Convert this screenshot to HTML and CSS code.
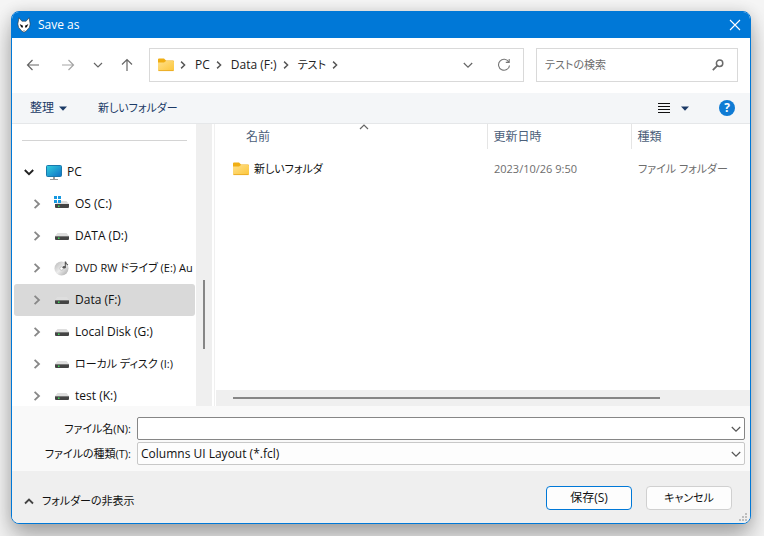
FILE: index.html
```html
<!doctype html>
<html lang="ja">
<head>
<meta charset="utf-8">
<title>Save as</title>
<link rel="stylesheet" href="styles.css">
</head>

<body>
	<!-- shared icons -->
	<svg class="defs" width="0" height="0">
		<defs>
			<linearGradient id="gold" x1="0" y1="0" x2="1" y2="1"><stop offset="0" stop-color="#ffe08a"/><stop offset="1" stop-color="#fcc63a"/></linearGradient>
			<linearGradient id="screen" x1="0" y1="0" x2="1" y2="1"><stop offset="0" stop-color="#32d0dd"/><stop offset="1" stop-color="#0f6fc6"/></linearGradient>
			<linearGradient id="disc" x1="0" y1="0" x2="1" y2="1"><stop offset="0" stop-color="#b5b5b5"/><stop offset=".5" stop-color="#ececec"/><stop offset="1" stop-color="#a5a5a5"/></linearGradient>
		</defs>
		<symbol id="folder" viewBox="0 0 16 14">
			<path d="M0 1.5Q0 .5 1 .5H6L8 2.5H15Q16 2.5 16 3.5V8H0z" fill="#f0ae13"/>
			<path d="M0 4.5H6L8 3H15Q16 3 16 4V12Q16 13 15 13H1Q0 13 0 12z" fill="url(#gold)"/>
			<path d="M.5 12.6H15.5" stroke="#e6a41c" stroke-width=".8"/>
		</symbol>
		<symbol id="drive" viewBox="0 0 16 16">
			<path d="M3.5 5H12.5L15 8H1z" fill="#dedede"/>
			<path d="M1 8H15V11Q15 12 14 12H2Q1 12 1 11z" fill="#444"/>
			<path d="M1 8.5H15" stroke="#777"/>
			<path d="M4 9.5H5.5V11H4z" fill="#3fdc5a"/>
		</symbol>
		<symbol id="right" viewBox="0 0 10 10"><path d="M2.6 .8L7 5L2.6 9.2" fill="none" stroke="currentColor" stroke-width="1.8"/></symbol>
		<symbol id="down" viewBox="0 0 10 10"><path d="M.8 3L5 7.2L9.2 3" fill="none" stroke="currentColor" stroke-width="1.2"/></symbol>
		<symbol id="open" viewBox="0 0 10 10"><path d="M.8 3L5 7.2L9.2 3" fill="none" stroke="currentColor" stroke-width="1.9"/></symbol>
		<symbol id="caret" viewBox="0 0 8 5"><path d="M0 .5H8L4 4.7z" fill="#1b3a66"/></symbol>
	</svg>

	<div class="dialog">
		<div class="title">
			<svg width="14" height="16" viewBox="0 0 14 16">
				<path d="M2 .8L4.9 4.2H9.1L12 .8L13.2 7L12.4 10.4L9 14.2L7 15.2L5 14.2L1.6 10.4L.8 7z" fill="#fff" stroke="#333" stroke-width=".6"/>
				<path d="M2.6 7L6 8.8L5.7 10.8L4.2 10.2zM11.4 7L8 8.8L8.3 10.8L9.8 10.2z" fill="#111"/>
				<path d="M6.2 13.2H7.8L7 14z" fill="#333"/>
			</svg>
			<h1>Save as</h1>
			<button class="close" aria-label="閉じる"><svg width="12" height="12" viewBox="0 0 12 12"><path d="M1 1L11 11M11 1L1 11" stroke="#fff" stroke-width="1.1"/></svg></button>
		</div>

		<div class="nav">
			<div class="arrows">
				<button aria-label="戻る"><svg width="14" height="14" viewBox="0 0 14 14"><path d="M13 7H1.5M6.5 2L1.5 7L6.5 12"/></svg></button>
				<button aria-label="進む" disabled><svg width="14" height="14" viewBox="0 0 14 14"><path d="M1 7H12.5M7.5 2L12.5 7L7.5 12"/></svg></button>
				<button class="recent" aria-label="最近"><svg width="10" height="10" viewBox="0 0 10 10"><path d="M1 3L5 7L9 3"/></svg></button>
				<button aria-label="上へ"><svg width="14" height="14" viewBox="0 0 14 14"><path d="M7 13V1.5M2 6.5L7 1.5L12 6.5"/></svg></button>
			</div>
			<div class="address">
				<svg width="16" height="14"><use href="#folder"/></svg>
				<svg class="sep" width="8" height="8"><use href="#right"/></svg>
				<button>PC</button>
				<svg class="sep" width="8" height="8"><use href="#right"/></svg>
				<button>Data (F:)</button>
				<svg class="sep" width="8" height="8"><use href="#right"/></svg>
				<button class="kana">テスト</button>
				<svg class="sep" width="8" height="8"><use href="#right"/></svg>
				<button class="history" aria-label="履歴"><svg width="10" height="10"><use href="#down"/></svg></button>
				<button class="refresh" aria-label="更新"><svg width="14" height="14" viewBox="0 0 14 14"><path d="M11.8 4A5.5 5.5 0 1 0 12.5 7.5M12.2 1V4.4H8.8" fill="none" stroke="#777" stroke-width="1.1"/></svg></button>
			</div>
			<div class="search">
				<input class="kana" type="text" placeholder="テストの検索" aria-label="テストの検索">
				<svg width="12" height="12" viewBox="0 0 12 12"><circle cx="7.6" cy="4.2" r="3.2" fill="none" stroke="#6b6b6b" stroke-width="1.5"/><path d="M5.3 6.6L.8 11.2" stroke="#6b6b6b" stroke-width="1.8"/></svg>
			</div>
		</div>

		<div class="commands">
			<button>整理 <svg width="8" height="5"><use href="#caret"/></svg></button>
			<button class="kana">新しいフォルダー</button>
			<button class="view" aria-label="表示">
				<svg width="12" height="11" viewBox="0 0 12 11"><path d="M0 .5H12M0 3.5H12M0 6.5H12M0 9.5H12" stroke="#111"/></svg>
				<svg width="8" height="5"><use href="#caret"/></svg>
			</button>
			<button class="help" aria-label="ヘルプ">?</button>
		</div>

		<div class="main">
			<div class="tree">
				<hr>
				<ul>
					<li class="root">
						<svg class="arrow" width="10" height="10"><use href="#open"/></svg>
						<svg width="16" height="16" viewBox="0 0 16 16"><rect x=".5" y="1.5" width="15" height="11" rx="1" fill="url(#screen)" stroke="#1a78ad"/><path d="M7 13H9V15H12V16H4V15H7z" fill="#999"/></svg>
						<span>PC</span>
					</li>
					<li>
						<svg class="arrow" width="10" height="10"><use href="#right"/></svg>
						<svg width="16" height="16" viewBox="0 0 16 16"><path d="M4 5H12.5L15 8H2z" fill="#dedede"/><path d="M1 8H15V11Q15 12 14 12H2Q1 12 1 11z" fill="#444"/><path d="M4 9.5H5.5V11H4z" fill="#3fdc5a"/><path d="M0 0H3V3H0zM4 0H7V3H4zM0 4H3V7H0zM4 4H7V7H4z" fill="#1698e0"/></svg>
						<span>OS (C:)</span>
					</li>
					<li>
						<svg class="arrow" width="10" height="10"><use href="#right"/></svg>
						<svg width="16" height="16"><use href="#drive"/></svg>
						<span>DATA (D:)</span>
					</li>
					<li>
						<svg class="arrow" width="10" height="10"><use href="#right"/></svg>
						<svg width="16" height="16" viewBox="0 0 16 16"><circle cx="7.5" cy="8.5" r="7" fill="url(#disc)"/><circle cx="7.5" cy="8.5" r="1.7" fill="#fff" stroke="#aaa" stroke-width=".6"/><path d="M11.3 1.5V7M11.5 1.5Q12 4 14 5" fill="none" stroke="#555" stroke-width="1.1"/><ellipse cx="10.2" cy="7.3" rx="1.6" ry="1.3" fill="#555"/></svg>
						<span class="kana">DVD RW ドライブ (E:) Au</span>
					</li>
					<li class="on">
						<svg class="arrow" width="10" height="10"><use href="#right"/></svg>
						<svg width="16" height="16"><use href="#drive"/></svg>
						<span>Data (F:)</span>
					</li>
					<li>
						<svg class="arrow" width="10" height="10"><use href="#right"/></svg>
						<svg width="16" height="16"><use href="#drive"/></svg>
						<span>Local Disk (G:)</span>
					</li>
					<li>
						<svg class="arrow" width="10" height="10"><use href="#right"/></svg>
						<svg width="16" height="16"><use href="#drive"/></svg>
						<span class="kana">ローカル ディスク (I:)</span>
					</li>
					<li>
						<svg class="arrow" width="10" height="10"><use href="#right"/></svg>
						<svg width="16" height="16"><use href="#drive"/></svg>
						<span>test (K:)</span>
					</li>
				</ul>
			</div>
			<div class="vscroll"><div class="thumb"></div></div>
			<div class="files">
				<table>
					<thead>
						<tr>
							<th class="name">名前<svg class="sort" width="10" height="6" viewBox="0 0 10 6"><path d="M1 5L5 1L9 5" fill="none" stroke="#666" stroke-width="1.2"/></svg></th>
							<th class="date">更新日時</th>
							<th class="type">種類</th>
						</tr>
					</thead>
					<tbody>
						<tr>
							<td class="name"><div class="file kana"><svg width="16" height="14"><use href="#folder"/></svg>新しいフォルダ</div></td>
							<td class="kana">2023/10/26 9:50</td>
							<td class="kana">ファイル フォルダー</td>
						</tr>
					</tbody>
				</table>
				<div class="hscroll"><div class="thumb"></div></div>
			</div>
		</div>

		<div class="fields">
			<label class="kana" for="fname">ファイル名(N):</label>
			<div class="combo">
				<input type="text" id="fname">
				<svg width="10" height="10"><use href="#down"/></svg>
			</div>
			<label class="kana" for="ftype">ファイルの種類(T):</label>
			<div class="combo">
				<select id="ftype"><option>Columns UI Layout (*.fcl)</option></select>
				<svg width="10" height="10"><use href="#down"/></svg>
			</div>
		</div>

		<div class="footer">
			<button class="fold kana"><svg width="10" height="10" viewBox="0 0 10 10"><path d="M1 7.5L5 3.5L9 7.5" fill="none" stroke="#444" stroke-width="1.8"/></svg>フォルダーの非表示</button>
			<button class="btn save">保存(S)</button>
			<button class="btn kana">キャンセル</button>
			<svg class="grip" width="8" height="8" viewBox="0 0 8 8"><path d="M6 0H8V2H6zM3 3H5V5H3zM6 3H8V5H6zM0 6H2V8H0zM3 6H5V8H3zM6 6H8V8H6z" fill="#bdbdbd"/></svg>
		</div>
	</div>
</body>
</html>
```
FILE: styles.css
```css
*{margin:0; padding:0; box-sizing:border-box; list-style:none;}
body{padding:11px 13px 12px 11px; background:#f5f5f5; color:#111; overflow:hidden;}
body,button,input,select{font:12px/16px "Open Sans","Noto Sans CJK JP",sans-serif; font-feature-settings:"palt";}
button{border:0; background:none; color:inherit; white-space:nowrap;}
svg{display:block; flex:none;}
.defs{position:absolute;}
.kana{font-size:11px;}

.dialog{border:1px solid #0078d7; border-radius:8px; overflow:hidden; background:#fff; box-shadow:0 14px 24px rgba(0,0,0,0.3),0 0 14px rgba(0,0,0,0.12);}
.title{display:flex; align-items:center; height:26px; padding:0 9px 0 5px; background:#0078d7; color:#fff;}
.title h1{margin-left:7px; font-size:12px; font-weight:normal;}
.close{margin-left:auto;}

.nav{display:flex; align-items:center; height:55px; padding:0 12px 2px 14px;}
.arrows{display:flex; align-items:center; width:123px; gap:21px;}
.arrows svg{fill:none; stroke:#666; stroke-width:1.2;}
.arrows button:disabled svg{stroke:#a5a5a5;}
.arrows .recent{width:10px; margin:0 -4px 0 -3px;}
.address{display:flex; align-items:center; flex:1; height:34px; padding:0 12px 0 8px; border:1px solid #d9d9d9; color:#222;}
.sep{margin:0 8px 0 5px; color:#555;}
.history{margin-left:auto; color:#666;}
.refresh{margin-left:24px;}
.search{display:flex; align-items:center; width:202px; height:34px; margin-left:12px; padding:0 13px 0 8px; border:1px solid #d9d9d9;}
.search input{flex:1; min-width:0; border:0; outline:0;}
.search input::placeholder{color:#6d6d6d;}

.commands{display:flex; align-items:center; height:31px; padding:0 15px 0 18px; background:#f4f6f8; border-bottom:1px solid #e5e7e9; color:#1b3a66;}
.commands button{display:flex; align-items:center; gap:5px; margin-right:31px;}
.commands .view{gap:11px; margin:0 30px 0 auto;}
.commands .help{justify-content:center; width:16px; height:16px; margin:0; border-radius:50%; background:#0f7bd4; color:#fff; font-weight:bold;}

.main{display:flex; height:282px;}
.tree{width:184px; padding:16px 1px 0 2px; overflow:hidden;}
.tree hr{height:1px; margin:0 8px 15px; border:0; background:#d4d4d4;}
.tree li{display:flex; align-items:center; height:32px; padding-left:18px; border-radius:3px; white-space:nowrap; overflow:hidden;}
.tree .arrow{margin-right:12px; color:#888;}
.tree span{margin-left:5px;}
.tree .root{padding-left:10px;}
.tree .root .arrow{color:#222;}
.tree .on{background:#d9d9d9;}
.vscroll{width:16px; padding:156px 7px 0; background:#efefef;}
.vscroll .thumb{height:69px; background:#868686;}

.files{display:flex; flex-direction:column; flex:1; min-width:0; margin-left:2px; padding-left:1px; border-left:1px solid #f0f0f0;}
table{width:100%; table-layout:fixed; border-collapse:collapse;}
th{position:relative; height:25px; padding-left:6px; border-left:1px solid #e5e5e5; color:#4c607a; font-weight:normal; text-align:left;}
td{height:40px; padding-left:7px; color:#6d6d6d;}
th.name{padding-left:30px; border:0;}
td.name{padding-left:17px; color:#111;}
.date{width:144px;}
.type{width:119px;}
.sort{position:absolute; top:0; left:143px;}
.file{display:flex; align-items:center; gap:5px;}
.hscroll{height:16px; margin-top:auto; padding:7px 90px 7px 17px; background:#efefef;}
.hscroll .thumb{height:2px; background:#868686;}

.fields{display:grid; grid-template-columns:119px 1fr; align-items:center; gap:2px 6px; padding:11px 5px 6px 0; background:#f9f9f9;}
.fields label{text-align:right;}
.combo{position:relative;}
.combo input,.combo select{display:block; width:100%; height:23px; padding:0 20px 0 3px; border:1px solid #868686; border-radius:2px; outline:0; background:#fff; color:#111; appearance:none;}
.combo select{border-color:#c8c8c8; background:#fdfdfd;}
.combo svg{position:absolute; top:7px; right:4px; color:#555; pointer-events:none;}

.footer{position:relative; display:flex; align-items:center; gap:14px; height:52px; padding:2px 18px 0 12px; background:#efefef;}
.fold{display:flex; align-items:center; gap:8px; margin:6px auto 0 0;}
.btn{width:86px; height:24px; border:1px solid #d0d0d0; border-radius:4px; background:#fdfdfd;}
.save{border-color:#0078d7;}
.grip{position:absolute; right:3px; bottom:2px;}
```
